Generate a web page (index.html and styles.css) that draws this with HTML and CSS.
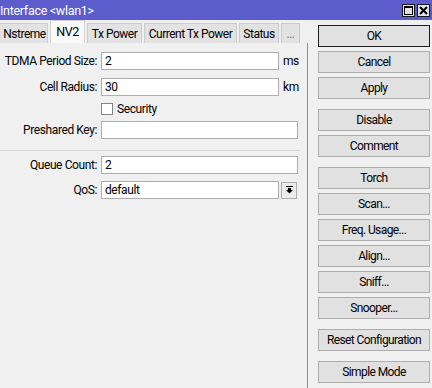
FILE: index.html
```html
<!DOCTYPE html>
<html>
<head>
<meta charset="utf-8">
<link rel="stylesheet" href="styles.css">
</head>
<body>
<div class="window">
  <div class="titlebar">
    <span class="title">Interface &lt;wlan1&gt;</span>
    <div class="wbtns">
      <span class="wbtn"><svg width="11" height="11" viewBox="0 0 11 11"><rect x="1.5" y="1.5" width="8" height="8" fill="none" stroke="#000" stroke-width="1"/><rect x="1" y="1" width="9" height="2" fill="#000"/></svg></span>
      <span class="wbtn"><svg width="11" height="11" viewBox="0 0 11 11"><path d="M2 2 L9 9 M9 2 L2 9" stroke="#000" stroke-width="2"/></svg></span>
    </div>
  </div>
  <div class="body">
    <div class="left">
      <div class="tabs">
        <span class="tab t1">Nstreme</span>
        <span class="tab active t2">NV2</span>
        <span class="tab t3">Tx Power</span>
        <span class="tab t4">Current Tx Power</span>
        <span class="tab t5">Status</span>
        <span class="tab t6">...</span>
      </div>
      <div class="panel">
        <div class="row r1">
          <span class="label">TDMA Period Size:</span>
          <span class="input short">2</span>
          <span class="unit">ms</span>
        </div>
        <div class="row r2">
          <span class="label">Cell Radius:</span>
          <span class="input short">30</span>
          <span class="unit">km</span>
        </div>
        <div class="checkrow">
          <span class="checkbox"></span>
          <span class="checklabel">Security</span>
        </div>
        <div class="row r3">
          <span class="label">Preshared Key:</span>
          <span class="input long"></span>
        </div>
        <div class="separator"></div>
        <div class="row r4">
          <span class="label">Queue Count:</span>
          <span class="input long">2</span>
        </div>
        <div class="row r5">
          <span class="label">QoS:</span>
          <span class="input short">default</span>
          <span class="dropbtn"><svg width="7" height="8" viewBox="0 0 7 8"><rect x="0" y="0" width="7" height="1" fill="#000"/><rect x="2" y="2" width="3" height="2" fill="#000"/><polygon points="0,4 7,4 3.5,7.5" fill="#000"/></svg></span>
        </div>
      </div>
    </div>
    <div class="buttons">
      <div class="group">
        <span class="btn default">OK</span>
        <span class="btn">Cancel</span>
        <span class="btn">Apply</span>
      </div>
      <div class="group">
        <span class="btn">Disable</span>
        <span class="btn">Comment</span>
      </div>
      <div class="group">
        <span class="btn">Torch</span>
        <span class="btn">Scan...</span>
        <span class="btn">Freq. Usage...</span>
        <span class="btn">Align...</span>
        <span class="btn">Sniff...</span>
        <span class="btn">Snooper...</span>
      </div>
      <div class="group">
        <span class="btn">Reset Configuration</span>
      </div>
      <div class="group">
        <span class="btn">Simple Mode</span>
      </div>
    </div>
  </div>
</div>
</body>
</html>
```
FILE: styles.css
```css
* { box-sizing: border-box; }
html, body { margin: 0; padding: 0; }
body {
  width: 432px;
  height: 388px;
  overflow: hidden;
  background: #f0f0f0;
  font-family: Roboto, "Liberation Sans", Arial, sans-serif;
  font-size: 12px;
  letter-spacing: -0.4px;
  color: #000;
}
.window { width: 432px; height: 388px; display: flex; flex-direction: column; }
.titlebar {
  height: 20px;
  background: #5c5ccd;
  display: flex;
  align-items: center;
  justify-content: space-between;
  padding: 0 2px 0 0;
}
.title { color: #fff; font-size: 12.5px; letter-spacing: -0.3px; }
.wbtns { display: flex; gap: 2px; }
.wbtn {
  width: 13px; height: 13px;
  background: #e4e4e4;
  border: 1px solid #1a1a1a;
  display: flex; align-items: center; justify-content: center;
}
.wbtn svg { display: block; }
.body { flex: 1; display: flex; }
.left { width: 308px; display: flex; flex-direction: column; }
.tabs { height: 23px; display: flex; align-items: flex-end; gap: 2px; }
.tab {
  height: 20px;
  background: #e2e2e2;
  border: 1px solid #cbcbcb;
  border-bottom: none;
  display: flex; align-items: center; justify-content: center;
  letter-spacing: -0.5px;
}
.tab.active { height: 23px; background: #f9f9f9; border-color: #d2d2d2; font-size: 12.5px; padding-bottom: 2px; }
.t1 { width: 48px; border-left: none; padding-left: 2px; }
.t2 { width: 35px; }
.t3 { width: 55px; }
.t4 { width: 93px; }
.t5 { width: 40px; }
.t6 { width: 19px; color: #777; }
.panel {
  flex: 1;
  border-right: 1px solid #8e8e8e;
  display: flex; flex-direction: column;
}
.row { display: flex; align-items: center; height: 18px; }
.label { width: 97px; text-align: right; margin-right: 4px; white-space: nowrap; }
.input {
  height: 18px;
  background: #fff;
  border: 1px solid #adadad;
  padding-left: 3px;
  display: flex; align-items: center;
}
.input.short { width: 178px; }
.input.long { width: 197px; }
.unit { margin-left: 4px; }
.r1 { margin-top: 9px; }
.r2 { margin-top: 8px; }
.checkrow { display: flex; align-items: center; height: 14px; margin-top: 6px; padding-left: 101px; }
.checkbox { width: 12px; height: 12px; background: #fff; border: 1px solid #858585; }
.checklabel { margin-left: 4px; }
.r3 { margin-top: 5px; }
.separator { margin-top: 11px; height: 1px; width: 300px; background: #d6d6d6; }
.r4 { margin-top: 5px; }
.r5 { margin-top: 7px; }
.dropbtn {
  width: 16px; height: 17px; margin-left: 2px;
  border: 1px solid #adadad;
  background: #ececec;
  display: flex; align-items: center; justify-content: center;
}
.dropbtn svg { display: block; }
.buttons {
  padding: 5px 0 0 10px;
  display: flex; flex-direction: column; gap: 10px;
}
.group { display: flex; flex-direction: column; gap: 4px; }
.btn {
  width: 112px; height: 22px;
  background: #e1e1e1;
  border: 1px solid #adadad;
  display: flex; align-items: center; justify-content: center;
  letter-spacing: -0.6px;
}
.btn.default { border-color: #1e1e1e; }
```
